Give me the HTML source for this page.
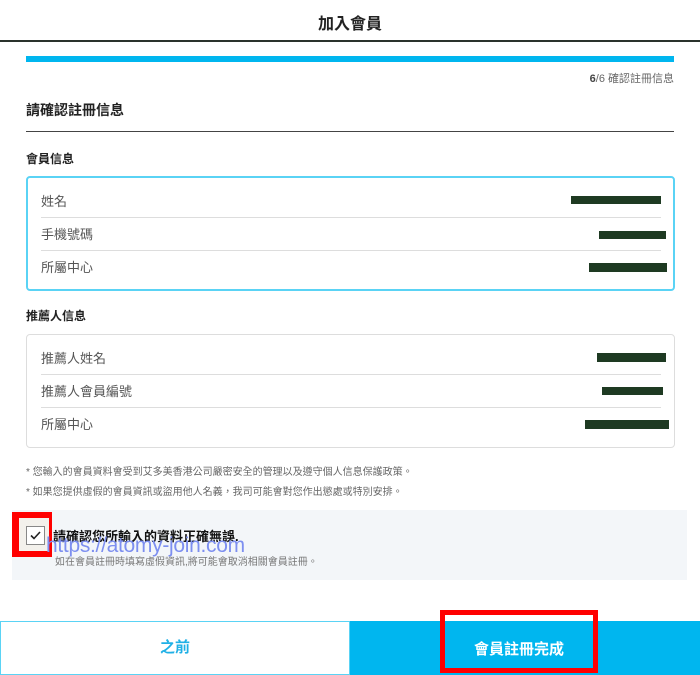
<!DOCTYPE html>
<html><head><meta charset="utf-8"><style>
*{margin:0;padding:0;box-sizing:border-box}
body{width:700px;height:675px;background:#fff;position:relative;overflow:hidden;font-family:"Liberation Sans","Noto Sans CJK TC",sans-serif;color:#222}
.a{position:absolute;white-space:nowrap}
.lbl{font-size:13px;color:#555;left:41px}
.sep{position:absolute;left:41px;width:620px;height:1px;background:#ddd}
.red{position:absolute;background:#1e3a22}
</style></head><body>
<div class="a" style="left:0;width:700px;top:10px;text-align:center;font-size:16px;font-weight:bold;color:#222">加入會員</div>
<div class="a" style="left:0;top:40px;width:700px;height:2px;background:#2a332c"></div>
<div class="a" style="left:26px;top:56px;width:648px;height:6px;background:#00b6ef"></div>
<div class="a" style="right:26px;top:70px;font-size:11px;color:#666"><b style="font-weight:bold;color:#444">6</b>/6 確認註冊信息</div>
<div class="a" style="left:26px;top:100px;font-size:14px;font-weight:bold">請確認註冊信息</div>
<div class="a" style="left:26px;top:131px;width:648px;height:1px;background:#444"></div>
<div class="a" style="left:26px;top:150px;font-size:12px;font-weight:bold">會員信息</div>
<div class="a" style="left:26px;top:176px;width:649px;height:115px;border:2px solid #5ad3f5;border-radius:4px"></div>
<div class="a lbl" style="top:191px">姓名</div>
<div class="sep" style="top:217px"></div>
<div class="a lbl" style="top:224px">手機號碼</div>
<div class="sep" style="top:250px"></div>
<div class="a lbl" style="top:257px">所屬中心</div>
<div class="red" style="left:571px;top:196px;width:90px;height:8px"></div>
<div class="red" style="left:599px;top:231px;width:67px;height:8px"></div>
<div class="red" style="left:589px;top:263px;width:78px;height:9px"></div>
<div class="a" style="left:26px;top:307px;font-size:12px;font-weight:bold">推薦人信息</div>
<div class="a" style="left:26px;top:334px;width:649px;height:114px;border:1px solid #ddd;border-radius:4px"></div>
<div class="a lbl" style="top:348px">推薦人姓名</div>
<div class="sep" style="top:374px"></div>
<div class="a lbl" style="top:381px">推薦人會員編號</div>
<div class="sep" style="top:407px"></div>
<div class="a lbl" style="top:414px">所屬中心</div>
<div class="red" style="left:597px;top:353px;width:69px;height:9px"></div>
<div class="red" style="left:602px;top:387px;width:61px;height:8px"></div>
<div class="red" style="left:585px;top:420px;width:84px;height:9px"></div>
<div class="a" style="left:26px;top:463px;font-size:10px;color:#666">* 您輸入的會員資料會受到艾多美香港公司嚴密安全的管理以及遵守個人信息保護政策。</div>
<div class="a" style="left:26px;top:483px;font-size:10px;color:#666">* 如果您提供虛假的會員資訊或盜用他人名義，我司可能會對您作出懲處或特別安排。</div>
<div class="a" style="left:12px;top:510px;width:675px;height:70px;background:#f3f6f9"></div>
<div class="a" style="left:12px;top:512px;width:40px;height:45px;background:#f00"></div>
<div class="a" style="left:19px;top:518px;width:30px;height:33px;background:#f3f1ec"></div>
<div class="a" style="left:26px;top:526px;width:19px;height:19px;border:1px solid #888;background:#fff"></div>
<svg class="a" style="left:28px;top:528px" width="15" height="15"><path d="M3 7.5l3 3 6-6.5" stroke="#222" stroke-width="1.6" fill="none"/></svg>
<div class="a" style="left:53px;top:526px;font-size:13px;font-weight:bold;color:#111">請確認您所輸入的資料正確無誤.</div>
<div class="a" style="left:46px;top:534px;font-size:21px;color:#7d8ff0;letter-spacing:-0.3px">https://atomy-join.com</div>
<div class="a" style="left:55px;top:553px;font-size:10px;color:#777">如在會員註冊時填寫虛假資訊,將可能會取消相關會員註冊。</div>
<div class="a" style="left:0;top:621px;width:350px;height:54px;border:1px solid #5ad3f5;background:#fff;text-align:center;line-height:52px;font-size:15px;font-weight:bold;color:#1fb0e6">之前</div>
<div class="a" style="left:350px;top:621px;width:350px;height:54px;background:#00b6ef"></div>
<div class="a" style="left:440px;top:610px;width:158px;height:63px;border:5px solid #f00"></div>
<div class="a" style="left:445px;top:638px;width:148px;text-align:center;font-size:15px;font-weight:bold;color:#fff">會員註冊完成</div>
</body></html>
